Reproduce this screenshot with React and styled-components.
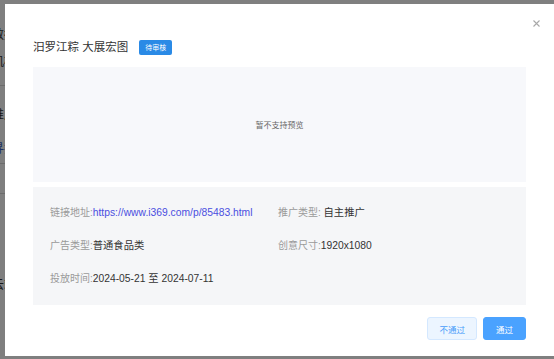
import styled, { createGlobalStyle } from "styled-components";

const GlobalStyle = createGlobalStyle`
    html, body {
        margin: 0;
        padding: 0;
        background: #ffffff;
        font-family: "Liberation Sans", "Noto Sans CJK SC", sans-serif;
    }
`

const Page = styled.div`
    position: relative;
    width: 554px;
    height: 359px;
    overflow: hidden;
    background: #ffffff;
`

const BgList = styled.div`
    display: flex;
    flex-direction: column;
    width: 40px;
    margin-left: -8px;
`

const BgRow = styled.div`
    height: ${(props) => props.$h}px;
    display: flex;
    align-items: center;
    font-size: 12px;
    color: ${(props) => (props.$blue ? "#3a63c4" : "#333333")};
    border-bottom: ${(props) => (props.$line ? "1px solid #d8d8d8" : "none")};
    box-sizing: border-box;
    white-space: nowrap;
`

const Mask = styled.div`
    position: absolute;
    inset: 0;
    background: rgba(0, 0, 0, 0.5);
    display: flex;
    align-items: flex-start;
`

const Modal = styled.div`
    position: relative;
    margin: 4px 0 0 5px;
    width: 549px;
    height: 352px;
    box-sizing: border-box;
    padding: 35px 28px 16px;
    background: #ffffff;
    display: flex;
    flex-direction: column;
`

const Close = styled.button`
    position: absolute;
    top: 13px;
    right: 12px;
    width: 12px;
    height: 12px;
    padding: 0;
    border: none;
    background: transparent;
    display: flex;
    align-items: center;
    justify-content: center;
    cursor: pointer;
`

const TitleRow = styled.div`
    height: 16px;
    display: flex;
    align-items: center;
    gap: 11px;
    margin-bottom: 12px;
`

const Title = styled.h3`
    margin: 0;
    font-size: 11.5px;
    font-weight: 400;
    line-height: 16px;
    color: #333333;
`

const Tag = styled.span`
    height: 15px;
    padding: 0 6px;
    border-radius: 2px;
    background: #2a8ae6;
    color: #ffffff;
    font-size: 7px;
    line-height: 15px;
`

const Preview = styled.div`
    height: 115px;
    background: #f7f8fb;
    display: flex;
    align-items: center;
    justify-content: center;
    font-size: 8px;
    color: #666666;
    margin-bottom: 5px;
`

const Info = styled.div`
    height: 118px;
    box-sizing: border-box;
    padding: 20px 17px;
    background: #f5f6f8;
    display: grid;
    grid-template-columns: 228px 1fr;
    grid-auto-rows: 12px;
    row-gap: 21px;
`

const Item = styled.div`
    font-size: 10.3px;
    line-height: 12px;
    color: #333333;
    white-space: nowrap;
`

const Label = styled.span`
    font-size: 10px;
    color: #9a9a9a;
`

const Link = styled.a`
    color: #4a4ee0;
    text-decoration: none;
`

const Footer = styled.div`
    margin-top: 12px;
    display: flex;
    justify-content: flex-end;
    gap: 6px;
`

const Button = styled.button`
    height: 23px;
    padding: 0 ${(props) => (props.$primary ? 12 : 11)}px;
    border-radius: 3px;
    font-family: inherit;
    font-size: 8.5px;
    border: 1px solid ${(props) => (props.$primary ? "#4aa2ff" : "#d4e8ff")};
    background: ${(props) => (props.$primary ? "#4aa2ff" : "#ecf5ff")};
    color: ${(props) => (props.$primary ? "#ffffff" : "#4a9dfa")};
    cursor: pointer;
`

const bgRows = [
    { h: 27 },
    { h: 12, text: "数据" },
    { h: 15 },
    { h: 12, text: "机构" },
    { h: 20, line: true },
    { h: 21 },
    { h: 12, text: "推广" },
    { h: 22 },
    { h: 12, text: "寻找", blue: true },
    { h: 11, line: true },
    { h: 30, line: true },
    { h: 83 },
    { h: 12, text: "云端" },
]

const App = () => {
    return (
        <>
            <GlobalStyle />
            <Page>
                <BgList>
                    {bgRows.map((row, i) => (
                        <BgRow key={i} $h={row.h} $blue={row.blue} $line={row.line}>
                            {row.text}
                        </BgRow>
                    ))}
                </BgList>
                <Mask>
                    <Modal>
                        <Close aria-label="关闭">
                            <svg width="7" height="7" viewBox="0 0 7 7">
                                <path d="M0.5 0.5L6.5 6.5M6.5 0.5L0.5 6.5" stroke="#a8a8a8" strokeWidth="1.1" />
                            </svg>
                        </Close>
                        <TitleRow>
                            <Title>汨罗江粽 大展宏图</Title>
                            <Tag>待审核</Tag>
                        </TitleRow>
                        <Preview>暂不支持预览</Preview>
                        <Info>
                            <Item>
                                <Label>链接地址:</Label>
                                <Link href="#">https://www.i369.com/p/85483.html</Link>
                            </Item>
                            <Item>
                                <Label>推广类型: </Label>自主推广
                            </Item>
                            <Item>
                                <Label>广告类型:</Label>普通食品类
                            </Item>
                            <Item>
                                <Label>创意尺寸:</Label>1920x1080
                            </Item>
                            <Item>
                                <Label>投放时间:</Label>2024-05-21 至 2024-07-11
                            </Item>
                        </Info>
                        <Footer>
                            <Button>不通过</Button>
                            <Button $primary>通过</Button>
                        </Footer>
                    </Modal>
                </Mask>
            </Page>
        </>
    )
}

export default App;
